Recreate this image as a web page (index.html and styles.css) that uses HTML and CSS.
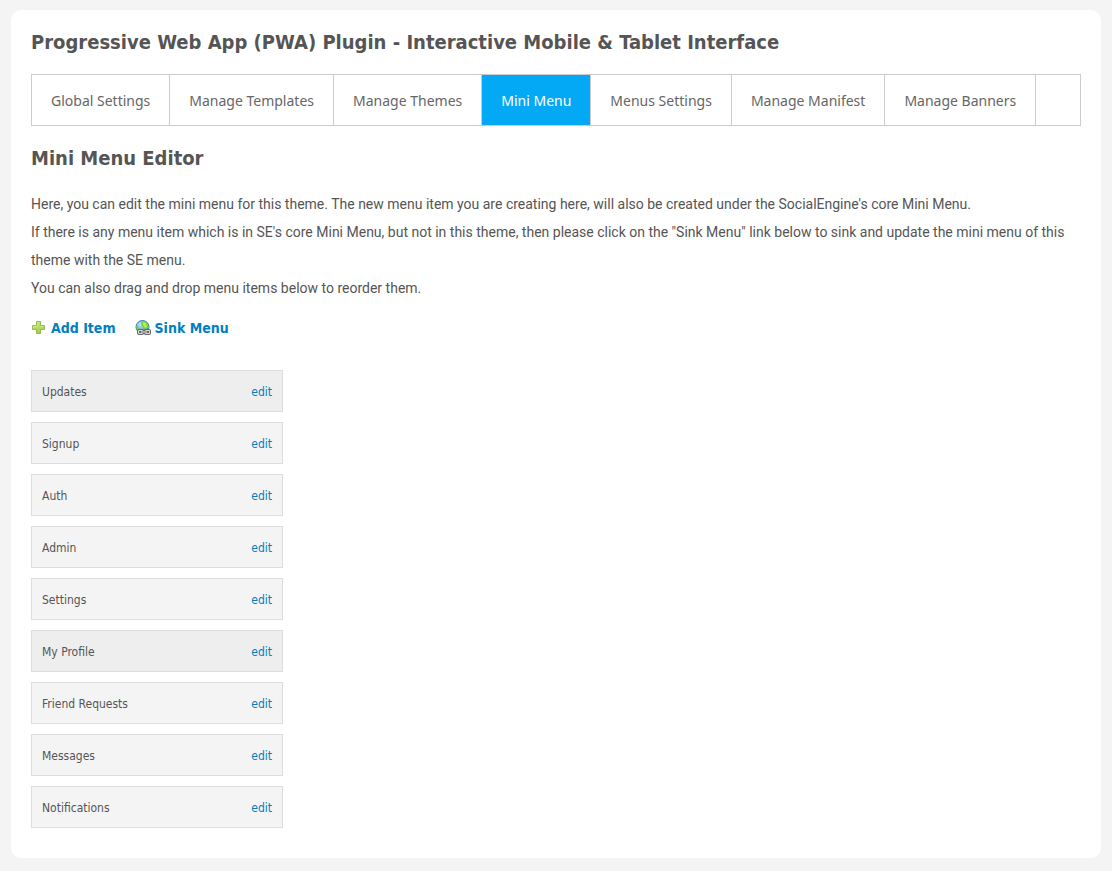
FILE: index.html
```html
<!DOCTYPE html>
<html lang="en">
<head>
<meta charset="utf-8">
<meta name="viewport" content="width=device-width, initial-scale=1">
<title>Mini Menu Editor</title>
<link rel="stylesheet" href="styles.css">
</head>
<body>
<main class="panel">
  <h1 class="title">Progressive Web App (PWA) Plugin - Interactive Mobile &amp; Tablet Interface</h1>
  <nav class="tabs">
    <a class="tab" href="#global">Global Settings</a>
    <a class="tab" href="#templates">Manage Templates</a>
    <a class="tab" href="#themes">Manage Themes</a>
    <a class="tab active" href="#mini" aria-current="page">Mini Menu</a>
    <a class="tab" href="#menus">Menus Settings</a>
    <a class="tab" href="#manifest">Manage Manifest</a>
    <a class="tab" href="#banners">Manage Banners</a>
  </nav>
  <h2 class="title">Mini Menu Editor</h2>
  <p class="intro">Here, you can edit the mini menu for this theme. The new menu item you are creating here, will also be created under the SocialEngine's core Mini Menu.<br>If there is any menu item which is in SE's core Mini Menu, but not in this theme, then please click on the "Sink Menu" link below to sink and update the mini menu of this theme with the SE menu.<br>You can also drag and drop menu items below to reorder them.</p>
  <div class="actions">
    <a class="action" href="#add">
      <svg class="icon" viewBox="0 0 16 16" aria-hidden="true">
        <defs><linearGradient id="leaf" x1="0" y1="0" x2="0" y2="1"><stop offset="0" stop-color="#c5e27b"/><stop offset="1" stop-color="#a2cf50"/></linearGradient></defs>
        <path d="M5.500 1.500h4v4h4v4h-4v4h-4v-4h-4v-4h4z" fill="url(#leaf)" stroke="#8dbe48" stroke-linejoin="round"/>
        <path d="M6.500 6.500v-4h2M2.500 8.500v-2h4M9.500 6.500h3" fill="none" stroke="#cfe78f"/>
      </svg>Add Item</a>
    <a class="action" href="#sink">
      <svg class="icon" viewBox="0 0 16 16" aria-hidden="true">
        <defs><radialGradient id="sea" cx=".35" cy=".3" r=".7"><stop offset="0" stop-color="#c4e9fc"/><stop offset="1" stop-color="#3385c9"/></radialGradient></defs>
        <circle cx="7.500" cy="7" r="6.500" fill="url(#sea)" stroke="#347fb6"/>
        <path d="M7 1h3l3 3 1 4-4 1-2-2-2-2zM1 6l2 1 2 2-1 2-2-1z" fill="#72d52c"/>
        <path d="M8 2l3 1 1 4-2 1-2-3z" fill="#b2ee55"/>
        <rect x="2" y="9" width="7" height="6" rx="2" fill="#666"/>
        <rect x="9" y="9" width="7" height="6" rx="2" fill="#666"/>
        <path d="M3.500 10.500h4M3.500 13.500h4M10.500 10.500h4M10.500 13.500h4M3.500 10.500v3M14.500 10.500v3" fill="none" stroke="#ddd"/>
        <path d="M6 12h6" stroke="#eee" stroke-width="1"/>
      </svg>Sink Menu</a>
  </div>
  <ul class="items">
    <li class="item shaded"><span>Updates</span><a href="#edit">edit</a></li>
    <li class="item"><span>Signup</span><a href="#edit">edit</a></li>
    <li class="item"><span>Auth</span><a href="#edit">edit</a></li>
    <li class="item"><span>Admin</span><a href="#edit">edit</a></li>
    <li class="item"><span>Settings</span><a href="#edit">edit</a></li>
    <li class="item shaded"><span>My Profile</span><a href="#edit">edit</a></li>
    <li class="item"><span>Friend Requests</span><a href="#edit">edit</a></li>
    <li class="item"><span>Messages</span><a href="#edit">edit</a></li>
    <li class="item"><span>Notifications</span><a href="#edit">edit</a></li>
  </ul>
</main>
</body>
</html>
```
FILE: styles.css
```css
* { box-sizing: border-box; }
body {
  margin: 10px 11px 13px;
  background: #f4f4f4;
  color: #555;
  font-family: Tahoma, "DejaVu Sans Condensed", "DejaVu Sans", sans-serif;
  font-size: 14px;
}
a { color: #0080c2; text-decoration: none; }
.panel {
  padding: 20px 20px 30px;
  background: #fff;
  border-radius: 10px;
}
.title {
  margin: 0;
  font-size: 20px;
  line-height: 24px;
}
.tabs {
  display: flex;
  margin: 20px 0;
  border: 1px solid #ccc;
}
.tab {
  padding: 1px 19px 0;
  border-right: 1px solid #ccc;
  color: #666;
  font-family: Tahoma, "Noto Sans", sans-serif;
  font-size: 14px;
  line-height: 49px;
  white-space: nowrap;
}
.tab.active { background: #03a9f4; color: #fff; }
.intro {
  margin: 20px 0 16px;
  font-family: Tahoma, Roboto, sans-serif;
  line-height: 28px;
}
.actions {
  display: flex;
  gap: 19px;
  line-height: 20px;
}
.action {
  display: flex;
  align-items: center;
  gap: 4px;
  font-weight: bold;
}
.icon { width: 16px; height: 16px; }
.items {
  display: grid;
  gap: 10px;
  width: 252px;
  margin: 32px 0 0;
  padding: 0;
  list-style: none;
}
.item {
  display: flex;
  justify-content: space-between;
  padding: 11px 10px 9px;
  border: 1px solid #ddd;
  background: #f4f4f4;
  font-size: 12px;
  line-height: 20px;
}
.item.shaded { background: #eee; }
```
